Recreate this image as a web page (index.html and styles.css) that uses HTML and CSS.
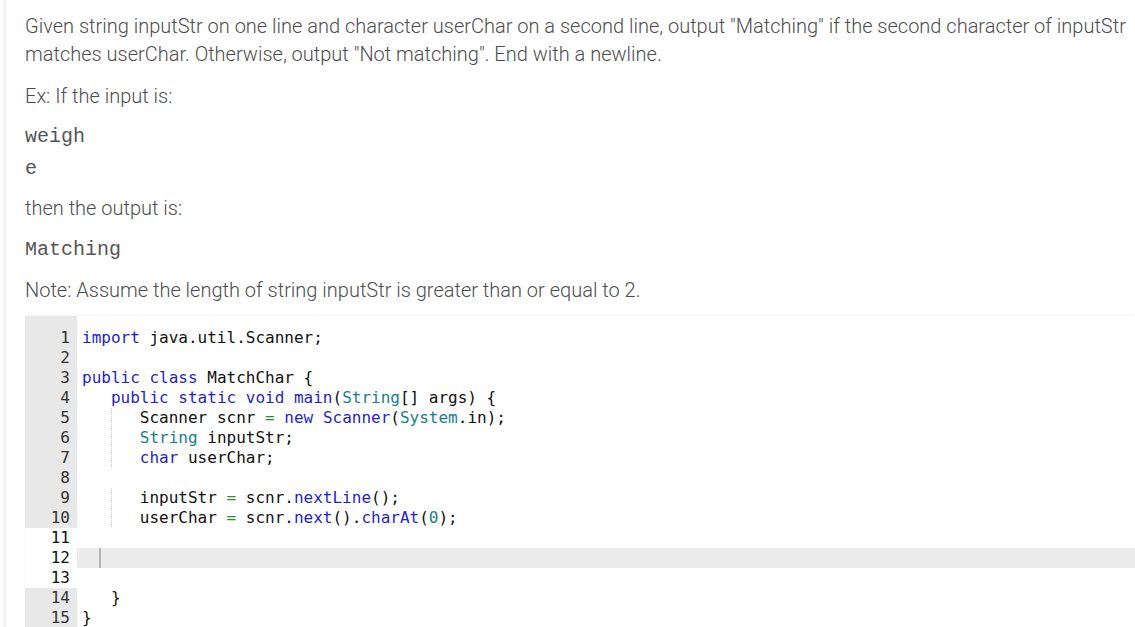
FILE: index.html
```html
<!DOCTYPE html>
<html>
<head>
<meta charset="utf-8">
<link rel="stylesheet" href="styles.css">
</head>
<body>
<div class="page">
  <p class="txt first">Given string inputStr on one line and character userChar on a second line, output "Matching" if the second character of inputStr matches userChar. Otherwise, output "Not matching". End with a newline.</p>
  <p class="txt">Ex: If the input is:</p>
  <pre class="sample in">weigh
e</pre>
  <p class="txt">then the output is:</p>
  <pre class="sample out">Matching</pre>
  <p class="txt">Note: Assume the length of string inputStr is greater than or equal to 2.</p>

  <div class="editor">
    <div class="gutter">
      <div class="gpad"></div>
      <div class="ln">1</div>
      <div class="ln">2</div>
      <div class="ln">3</div>
      <div class="ln">4</div>
      <div class="ln">5</div>
      <div class="ln">6</div>
      <div class="ln">7</div>
      <div class="ln">8</div>
      <div class="ln">9</div>
      <div class="ln">10</div>
      <div class="ln edit">11</div>
      <div class="ln edit">12</div>
      <div class="ln edit">13</div>
      <div class="ln">14</div>
      <div class="ln">15</div>
    </div>
    <div class="code">
      <div class="cpad"></div>
      <div class="cl"><span class="kw">import</span> java.util.Scanner;</div>
      <div class="cl"> </div>
      <div class="cl"><span class="kw">public</span> <span class="kw">class</span> MatchChar {</div>
      <div class="cl"><span class="ind">   </span><span class="kw">public</span> <span class="kw">static</span> <span class="kw">void</span> <span class="kw">main</span>(<span class="ty">String</span>[] args) {</div>
      <div class="cl"><span class="ind">   </span><span class="ind g">   </span>Scanner scnr <span class="op">=</span> <span class="kw">new</span> <span class="kw">Scanner</span>(<span class="ty">System</span>.in);</div>
      <div class="cl"><span class="ind">   </span><span class="ind g">   </span><span class="ty">String</span> inputStr;</div>
      <div class="cl"><span class="ind">   </span><span class="ind g">   </span><span class="kw">char</span> userChar;</div>
      <div class="cl"> </div>
      <div class="cl"><span class="ind">   </span><span class="ind g">   </span>inputStr <span class="op">=</span> scnr.<span class="kw">nextLine</span>();</div>
      <div class="cl"><span class="ind">   </span><span class="ind g">   </span>userChar <span class="op">=</span> scnr.<span class="kw">next</span>().<span class="kw">charAt</span>(<span class="ty">0</span>);</div>
      <div class="cl"> </div>
      <div class="cl active"><span class="cursor"></span></div>
      <div class="cl"> </div>
      <div class="cl"><span class="ind">   </span>}</div>
      <div class="cl">}</div>
    </div>
  </div>
</div>
</body>
</html>
```

FILE: styles.css
```css
html, body {
  margin: 0;
  padding: 0;
  background: #fff;
  overflow: hidden;
}

.page {
  margin-left: 4px;
  border-left: 2px solid #efefef;
  box-shadow: -1px 0 2px rgba(0,0,0,0.04);
  padding: 12px 0 0 19px;
  height: 700px;
}

.txt {
  font-family: Roboto, "Liberation Sans", sans-serif;
  font-weight: 300;
  font-size: 20px;
  line-height: 28px;
  color: #4d4d4d;
  margin: 0 0 14px 0;
}

.sample {
  font-family: "Liberation Mono", monospace;
  font-size: 20px;
  line-height: 32px;
  color: #555;
  margin: -2px 0 10px 0;
}

.sample.in {
  margin: -3px 0 9px 0;
}

.editor {
  display: flex;
  margin-top: -2px;
  box-shadow: 0 -2px 3px rgba(0,0,0,0.035);
  font-family: "DejaVu Sans Mono", "Liberation Mono", monospace;
  font-size: 16px;
  line-height: 20px;
}

.gutter {
  width: 52px;
  flex: none;
}

.gpad {
  height: 12px;
  background: #e8e8e8;
}

.ln {
  height: 20px;
  background: #e8e8e8;
  color: #333;
  text-align: right;
  padding-right: 7px;
}

.ln.edit {
  background: #fff;
  color: #111;
}

.code {
  flex: 1;
}

.cpad {
  height: 12px;
}

.cl {
  height: 20px;
  padding-left: 5px;
  white-space: pre;
  color: #111;
}

.cl.active {
  background: #ececec;
}

.cursor {
  display: inline-block;
  width: 2px;
  height: 20px;
  margin-left: 17px;
  background: #b4b4b4;
  vertical-align: top;
}

.ind {
  display: inline-block;
  height: 20px;
  vertical-align: top;
}

.ind.g {
  background-image: linear-gradient(#c8c8c8 50%, transparent 50%);
  background-size: 1px 2px;
  background-repeat: repeat-y;
}

.kw { color: #1f1fc8; }
.ty { color: #17808a; }
.op { color: #2c8c2c; }
```
